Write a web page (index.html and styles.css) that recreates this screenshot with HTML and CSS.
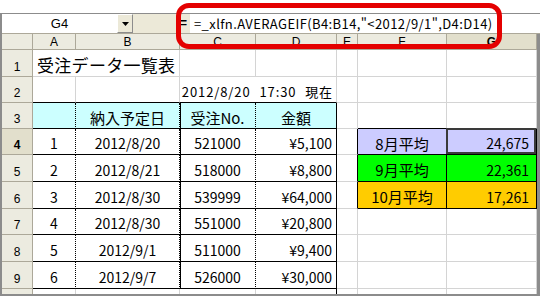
FILE: index.html
```html
<!DOCTYPE html>
<html lang="ja">
<head>
<meta charset="utf-8">
<link rel="stylesheet" href="styles.css">
</head>
<body>
<div class="win">
  <div class="fbar">
    <div class="name">G4</div>
    <div class="drop"><svg width="7" height="4" viewBox="0 0 7 4"><path d="M0 0H7L3.5 4Z" fill="#000"/></svg></div>
    <div class="eq">=</div>
    <div class="formula">=_xlfn.AVERAGEIF(B4:B14,"&lt;2012/9/1",D4:D14)</div>
  </div>
  <div class="sheet">
    <div class="ch corner"></div><div class="ch">A</div><div class="ch">B</div><div class="ch">C</div><div class="ch">D</div><div class="ch">E</div><div class="ch">F</div><div class="ch act">G</div>

    <div class="rh">1</div><div class="c title">受注データ一覧表</div><div class="c"></div><div class="c"></div><div class="c"></div><div class="c"></div><div class="c"></div>

    <div class="rh">2</div><div class="c tt"></div><div class="c tt"></div><div class="c tt stamp">2012/8/20 17:30 現在</div><div class="c"></div><div class="c"></div><div class="c"></div>

    <div class="rh">3</div><div class="c t hd"></div><div class="c t hd">納入予定日</div><div class="c t hd">受注No.</div><div class="c t tr hd">金額</div><div class="c"></div><div class="c bb"></div><div class="c bb"></div>

    <div class="rh act">4</div><div class="c t ctr">1</div><div class="c t ctr">2012/8/20</div><div class="c t ctr">521000</div><div class="c t tr rt">¥5,100</div><div class="c br"></div><div class="c box ctr lav">8月平均</div><div class="c box rt lav sel">24,675</div>

    <div class="rh">5</div><div class="c t ctr">2</div><div class="c t ctr">2012/8/21</div><div class="c t ctr">518000</div><div class="c t tr rt">¥8,800</div><div class="c br"></div><div class="c box ctr grn">9月平均</div><div class="c box rt grn">22,361</div>

    <div class="rh">6</div><div class="c t ctr">3</div><div class="c t ctr">2012/8/30</div><div class="c t ctr">539999</div><div class="c t tr rt">¥64,000</div><div class="c br"></div><div class="c box ctr org">10月平均</div><div class="c box rt org">17,261</div>

    <div class="rh">7</div><div class="c t ctr">4</div><div class="c t ctr">2012/8/30</div><div class="c t ctr">551000</div><div class="c t tr rt">¥20,800</div><div class="c"></div><div class="c"></div><div class="c"></div>

    <div class="rh">8</div><div class="c t ctr">5</div><div class="c t ctr">2012/9/1</div><div class="c t ctr">511000</div><div class="c t tr rt">¥9,400</div><div class="c"></div><div class="c"></div><div class="c"></div>

    <div class="rh">9</div><div class="c t ctr">6</div><div class="c t ctr">2012/9/7</div><div class="c t ctr">526000</div><div class="c t tr rt">¥30,000</div><div class="c"></div><div class="c"></div><div class="c"></div>

    <div class="rh"></div><div class="c"></div><div class="c"></div><div class="c"></div><div class="c tr"></div><div class="c"></div><div class="c"></div><div class="c"></div>
  </div>
</div>
<div class="callout"></div>
</body>
</html>
```
FILE: styles.css
```css
* { box-sizing: border-box; margin: 0; padding: 0; }
html, body { background: #fff; }
body {
  width: 540px;
  height: 296px;
  overflow: hidden;
  position: relative;
  font-family: "Noto Sans CJK JP", "Liberation Sans", sans-serif;
  color: #000;
}
.win {
  margin-top: 13px;
  border-top: 1px solid #8c8c8c;
  border-left: 2px solid #8c8c8c;
  background: #ece9d8;
}
.fbar {
  display: flex;
  height: 20px;
  border-bottom: 1px solid #aca899;
  background: #ece9d8;
}
.name {
  width: 115px;
  background: #fff;
  text-align: center;
  font-family: "Liberation Sans", sans-serif;
  font-size: 13px;
  line-height: 19px;
}
.drop {
  width: 16px;
  display: flex;
  align-items: center;
  justify-content: center;
  background: #ece9d8;
  border: 1px solid;
  border-color: #fff #8c8c8c #8c8c8c #fff;
}
.eq {
  width: 57px;
  text-align: right;
  padding-right: 3px;
  font-family: "Liberation Sans", sans-serif;
  font-size: 12px;
  font-weight: bold;
  line-height: 19px;
}
.formula {
  flex: 1;
  background: #fff;
  padding-left: 4px;
  font-size: 13px;
  letter-spacing: 0.4px;
  line-height: 19px;
  white-space: nowrap;
  overflow: hidden;
}
.sheet {
  display: grid;
  grid-template-columns: 31px 43px 104px 76px 81px 21px 89px 90px;
  grid-template-rows: 16px 27px 26px 26px 26px 27px 27px 26px 27px 27px 20px;
  height: 262px;
  overflow: hidden;
  background: #fff;
  border-right: 3px solid #8c8c8c;
  border-bottom: 2px solid #8c8c8c;
}
.ch, .rh {
  background: #ecebe0;
  border-right: 1px solid #aca899;
  border-bottom: 1px solid #aca899;
  font-family: "Liberation Sans", sans-serif;
  font-size: 12px;
  line-height: 14px;
  display: flex;
  justify-content: center;
}
.ch { align-items: center; }
.rh { align-items: flex-end; padding-bottom: 2px; }
.act { font-weight: bold; background: #e2dfcc; }
.c {
  border-right: 1px solid #d4d4d4;
  border-bottom: 1px solid #d4d4d4;
  display: flex;
  align-items: center;
  padding-top: 3px;
  font-size: 14px;
  white-space: nowrap;
  line-height: 1;
}
.title {
  grid-column: span 2;
  font-size: 17px;
  letter-spacing: 0.3px;
  padding-left: 4px;
  padding-top: 2px;
}
.stamp {
  grid-column: span 2;
  justify-content: flex-end;
  padding-right: 3px;
  font-size: 13px;
  letter-spacing: 0.9px;
  word-spacing: 5px;
}
.tt { border-bottom-color: #000; }
.t {
  border-bottom: 1px solid #000;
  border-right: 1px dotted #000;
}
.sheet > .t:nth-child(8n+2) { box-shadow: inset 1px 0 0 #000; }
.tr { border-right: 1px solid #000; }
.hd {
  background: #ccffff;
  justify-content: center;
  font-size: 15px;
}
.ctr { justify-content: center; }
.rt { justify-content: flex-end; padding-right: 4px; }
.box {
  border-right: 1px solid #000;
  border-bottom: 1px solid #000;
  font-size: 15px;
}
.box.rt { padding-right: 7px; font-size: 14px; }
.bb { border-bottom-color: #000; }
.br { border-right-color: #000; }
.lav { background: #ccccff; }
.grn { background: #00ff00; }
.org { background: #ffcc00; }
.sel { position: relative; }
.sel::after {
  content: "";
  position: absolute;
  left: -1px; top: -1px; right: 0; bottom: 0;
  border: 2px solid #3a3a3a;
}
.callout {
  position: absolute;
  left: 176px;
  top: 3px;
  width: 326px;
  height: 46px;
  border: 5px solid #e40000;
  border-radius: 13px;
}
```
